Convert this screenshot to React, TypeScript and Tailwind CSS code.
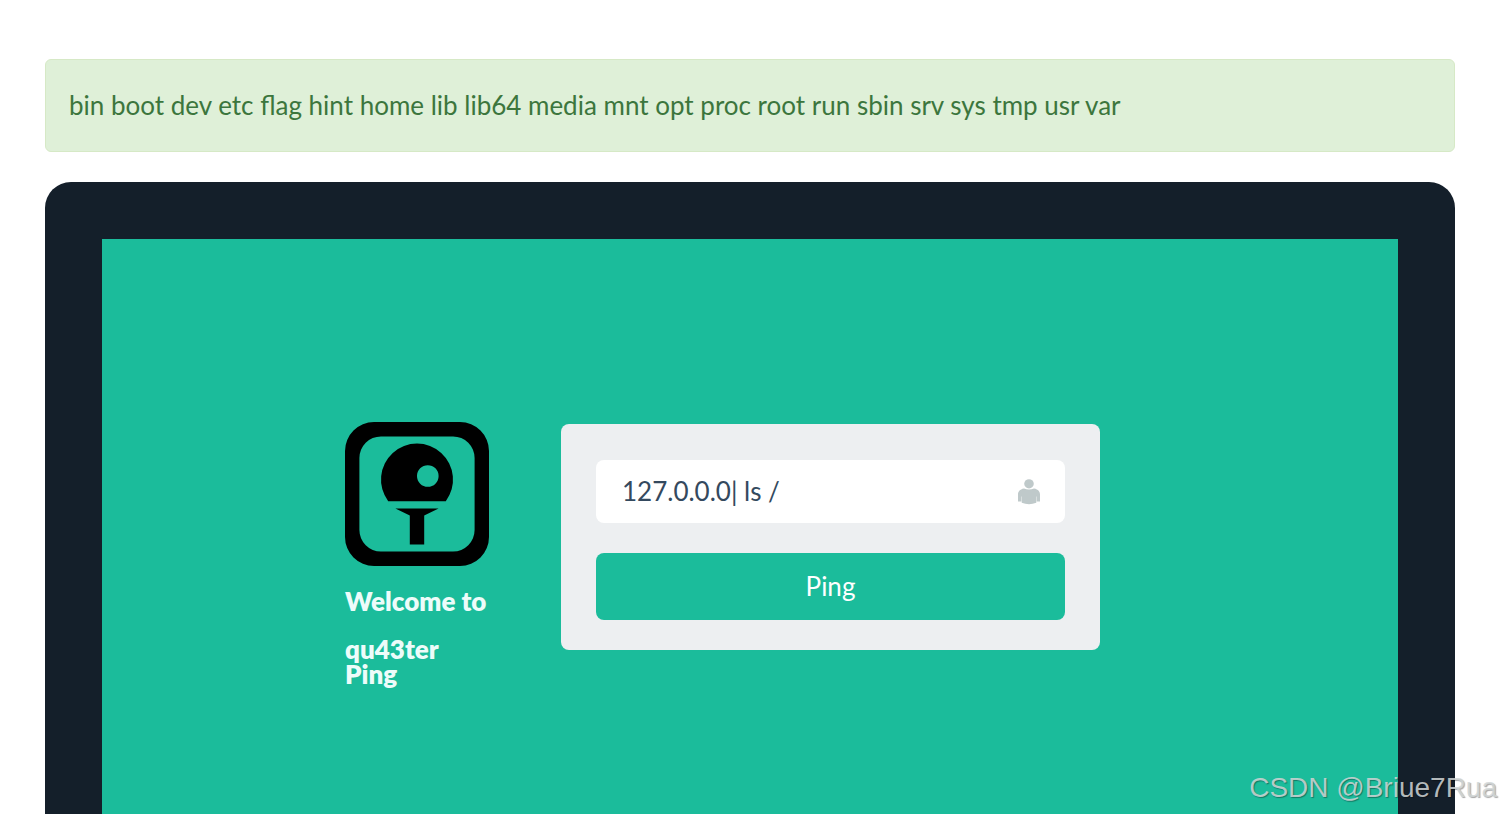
import { useState } from 'react';

function PaddleIcon() {
  return (
    <svg className="block w-36 h-36" viewBox="0 0 144 144" aria-hidden="true">
      <path
        fillRule="evenodd"
        d="M29 0H115A29 29 0 0 1 144 29V115A29 29 0 0 1 115 144H29A29 29 0 0 1 0 115V29A29 29 0 0 1 29 0ZM36 14.4A21.6 21.6 0 0 0 14.4 36V108A21.6 21.6 0 0 0 36 129.6H108A21.6 21.6 0 0 0 129.6 108V36A21.6 21.6 0 0 0 108 14.4Z"
      />
      <path
        fillRule="evenodd"
        d="M43.2 79.2A36 36 0 1 1 100.8 79.2ZM82.8 43.2A10.8 10.8 0 1 0 82.8 64.8A10.8 10.8 0 1 0 82.8 43.2Z"
      />
      <path d="M50.4 86.4H93.6L79.2 93.6V122.4H64.8V93.6Z" />
    </svg>
  );
}

function UserIcon() {
  return (
    <svg className="w-6 h-[26px]" viewBox="0 0 24 26" fill="#bfc9ca" aria-hidden="true">
      <ellipse cx="12" cy="4.8" rx="4.8" ry="4.6" />
      <path d="M7 9.4Q12 11.6 17 9.4C21.4 10.2 23 12.6 23 15.6V22.6H19.7V17.5H19.3V23.8Q12 26.6 4.7 23.8V17.5H4.3V22.6H1V15.6C1 12.6 2.6 10.2 7 9.4Z" />
    </svg>
  );
}

function OutputAlert({ text }: { text: string }) {
  return (
    <div role="alert" className="rounded-md border border-[#d6e9c6] bg-[#dff0d8] px-[23px] pt-6 pb-[25px] leading-[42px] text-[#3c763d]">
      {text}
    </div>
  );
}

function PingForm() {
  const [target, setTarget] = useState('127.0.0.0| ls /');

  return (
    <form
      onSubmit={(e) => e.preventDefault()}
      className="flex w-[539px] flex-col gap-[30px] rounded-lg bg-[#edeff1] px-[35px] pt-9 pb-[30px]"
    >
      <div className="relative">
        <input
          type="text"
          aria-label="Target"
          value={target}
          onChange={(e) => setTarget(e.target.value)}
          className="block h-[63px] w-full rounded-lg bg-white pr-16 pb-[2px] pl-[26px] text-[#34495e] outline-none"
        />
        <span className="pointer-events-none absolute inset-y-0 right-6 flex items-center">
          <UserIcon />
        </span>
      </div>
      <button type="submit" className="h-[67px] rounded-lg bg-[#1bbc9b] text-white">
        Ping
      </button>
    </form>
  );
}

export default function App() {
  return (
    <div className="relative flex min-h-screen flex-col bg-white pr-[46px] pl-[45px] pt-[59px] font-['Lato',sans-serif] text-[26px]">
      <OutputAlert text="bin boot dev etc flag hint home lib lib64 media mnt opt proc root run sbin srv sys tmp usr var" />

      <main className="mt-[30px] flex flex-1 flex-col rounded-t-[26px] bg-[#141f2a] px-[57px] pt-[57px]">
        <div className="flex flex-1 items-start gap-[72px] bg-[#1bbc9b] pt-[183px] pl-[243px]">
          <div className="w-36">
            <PaddleIcon />
            <h1 className="mt-[23px] leading-[25px] font-extrabold text-[#edfcfa]">
              Welcome to
              <small className="mt-[23px] block text-[26px]">qu43ter Ping</small>
            </h1>
          </div>
          <div className="pt-[2px]">
            <PingForm />
          </div>
        </div>
      </main>

      <div className="pointer-events-none absolute right-1 bottom-2 font-['Liberation_Sans',sans-serif] text-[28px] leading-9 text-[#d2d7d7]/85 [text-shadow:1px_1px_1px_rgba(0,0,0,0.35)]">
        CSDN @Briue7Rua
      </div>
    </div>
  );
}
